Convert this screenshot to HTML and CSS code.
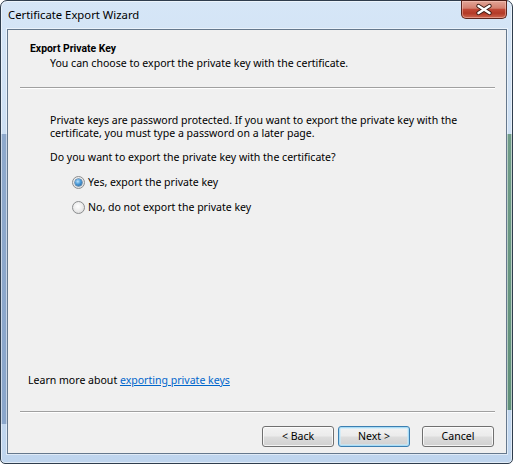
FILE: index.html
```html
<!DOCTYPE html>
<html>
<head>
<meta charset="utf-8">
<title>Certificate Export Wizard</title>
<link rel="stylesheet" href="styles.css">
</head>
<body>
<div class="window">
  <div class="titlebar">
    <span class="title">Certificate Export Wizard</span>
    <div class="close">
      <svg width="44" height="17" viewBox="0 0 44 17">
        <path d="M16.5 5 L27.5 12 M27.5 5 L16.5 12" stroke="#3b1b14" stroke-width="4.4" stroke-linecap="round" fill="none"/>
        <path d="M16.5 5 L27.5 12 M27.5 5 L16.5 12" stroke="#ffffff" stroke-width="2.5" stroke-linecap="round" fill="none"/>
      </svg>
    </div>
  </div>
  <div class="client">
    <div class="header">
      <div class="h-title">Export Private Key</div>
      <div class="h-sub">You can choose to export the private key with the certificate.</div>
    </div>
    <div class="sep"></div>
    <div class="content">
      <p class="para">Private keys are password protected. If you want to export the private key with the<br>certificate, you must type a password on a later page.</p>
      <p class="para q">Do you want to export the private key with the certificate?</p>
      <div class="options">
        <div class="opt"><span class="radio checked"></span><span>Yes, export the private key</span></div>
        <div class="opt"><span class="radio"></span><span>No, do not export the private key</span></div>
      </div>
    </div>
    <div class="learn">Learn more about <span class="link">exporting private keys</span></div>
    <div class="sep sep-bottom"></div>
    <div class="footer">
      <div class="btn">&lt; Back</div>
      <div class="btn default">Next &gt;</div>
      <div class="btn cancel">Cancel</div>
    </div>
  </div>
</div>
</body>
</html>
```
FILE: styles.css
```css
html, body {
  margin: 0;
  padding: 0;
  background: #ffffff;
}

body {
  font-family: "Noto Sans", "Open Sans", sans-serif;
  font-size: 10.55px;
  color: #000;
}

.window {
  box-sizing: border-box;
  width: 513px;
  height: 464px;
  border: 1px solid #2f3d4d;
  border-radius: 7px 7px 5px 5px;
  display: flex;
  flex-direction: column;
  box-shadow: inset 0 0 0 1px rgba(255, 255, 255, 0.55);
  background:
    linear-gradient(#8ea9cc, #8aa6cb) 0 133px / 6px 290px no-repeat,
    linear-gradient(#6f9c88, #5f9079) 100% 133px / 5px 276px no-repeat,
    linear-gradient(to bottom, #d6e6f7 0%, #c9dcf1 40%, #bfd5ee 100%);
}

.titlebar {
  height: 28px;
  display: flex;
  align-items: flex-start;
}

.title {
  font-size: 11.3px;
  line-height: 28px;
  padding-left: 7px;
  color: #000;
}

.close {
  box-sizing: border-box;
  margin-left: auto;
  margin-right: 5px;
  width: 46px;
  height: 19px;
  margin-top: -1px;
  border: 1px solid #5b251d;
  border-top-color: #4a1d16;
  border-radius: 0 0 5px 5px;
  background: linear-gradient(to bottom, #e2a597 0%, #d4806f 42%, #c04836 50%, #b33a27 72%, #cc6650 100%);
  box-shadow: inset 0 0 0 1px rgba(255, 210, 200, 0.45);
  display: flex;
  align-items: center;
  justify-content: center;
}

.close svg {
  display: block;
}

.client {
  margin: 0 5px 9px 6px;
  height: 423px;
  border: 1px solid #65788d;
  background: #f0f0f0;
  display: flex;
  flex-direction: column;
  box-shadow: 0 0 0 1px rgba(255, 255, 255, 0.5);
}

.header {
  padding: 12px 0 0 22px;
}

.h-title {
  font-family: "Roboto", "Noto Sans", sans-serif;
  font-weight: bold;
  font-size: 10.4px;
  line-height: 13px;
}

.h-sub {
  margin: 2px 0 0 20px;
  line-height: 13px;
  white-space: nowrap;
}

.sep {
  margin: 17px 11px 0 12px;
  border-top: 1px solid #a0a0a0;
  border-bottom: 1px solid #ffffff;
}

.content {
  flex: 1;
  padding-left: 42px;
}

.para {
  margin: 25px 0 0 0;
  line-height: 13px;
  white-space: nowrap;
}

.para.q {
  margin-top: 11px;
}

.options {
  margin: 12px 0 0 22px;
  display: flex;
  flex-direction: column;
  gap: 12px;
}

.opt {
  display: flex;
  align-items: center;
  height: 13px;
  line-height: 13px;
  gap: 3px;
}

.radio {
  box-sizing: border-box;
  width: 13px;
  height: 13px;
  border-radius: 50%;
  border: 1px solid #8b8d8f;
  background: radial-gradient(circle at 45% 40%, #ffffff 0%, #eeeeee 45%, #d2d2d2 100%);
  display: flex;
  align-items: center;
  justify-content: center;
  flex: none;
}

.radio.checked::after {
  content: "";
  width: 7px;
  height: 7px;
  border-radius: 50%;
  background: radial-gradient(circle at 40% 35%, #b9e1fb 0%, #4a9ad8 45%, #17558f 100%);
  box-shadow: 0 0 0 0.5px #1b4f80;
}

.learn {
  padding-left: 20px;
  line-height: 13px;
  white-space: nowrap;
}

.link {
  color: #0066cc;
  text-decoration: underline;
}

.sep-bottom {
  margin-top: 24px;
}

.footer {
  display: flex;
  justify-content: flex-end;
  padding: 13px 12px 6px 0;
}

.btn {
  box-sizing: border-box;
  width: 72px;
  height: 21px;
  border: 1px solid #707070;
  border-radius: 3px;
  background: linear-gradient(to bottom, #f3f3f3 0%, #ebebeb 48%, #dddddd 52%, #d0d0d0 100%);
  box-shadow: inset 0 0 0 1px rgba(255, 255, 255, 0.75);
  display: flex;
  align-items: center;
  justify-content: center;
  line-height: 13px;
}

.btn.default {
  margin-left: 4px;
  border-color: #3c7fb1;
  box-shadow: inset 0 0 0 1px #a9dcf6, inset 0 0 0 2px rgba(200, 235, 252, 0.6);
}

.btn.cancel {
  margin-left: 12px;
}
```
